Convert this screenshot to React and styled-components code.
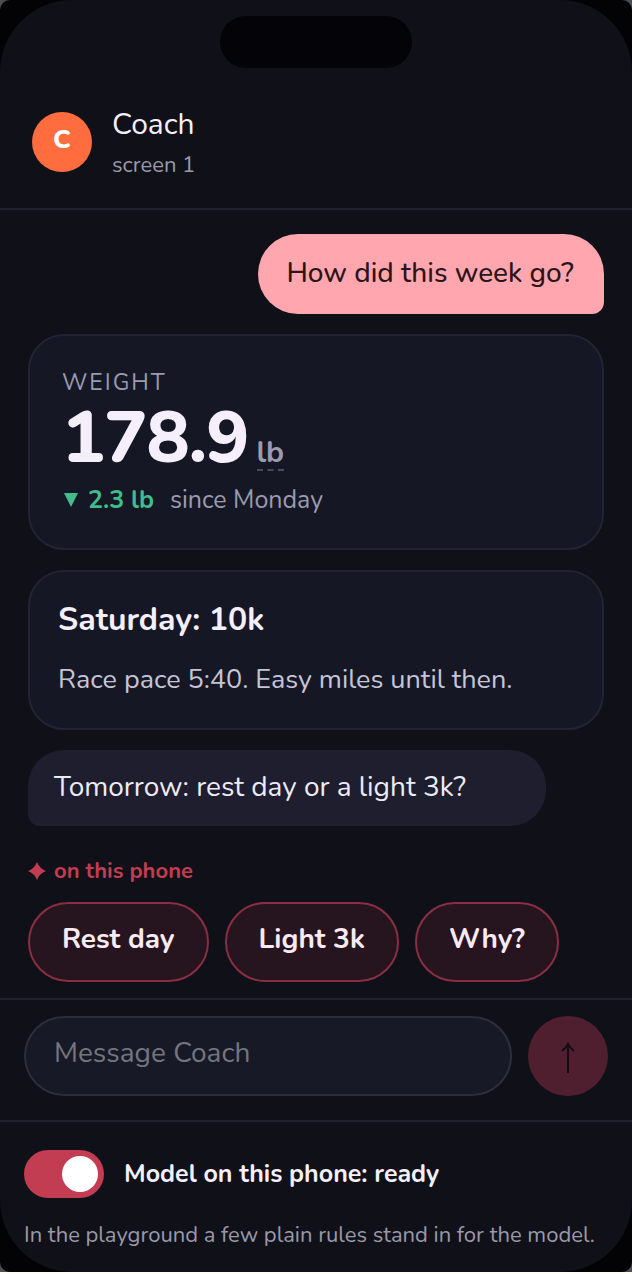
import React, { useState } from "react";
import styled, { createGlobalStyle } from "styled-components";

const GlobalStyle = createGlobalStyle`
  * { box-sizing: border-box; }
  body {
    margin: 0;
    background: #fffdf5;
    font-family: Nunito, Lato, "Liberation Sans", sans-serif;
    color: #f5effc;
  }
  button, input { font: inherit; color: inherit; }
  h1, h2, p { margin: 0; font-weight: 400; }
`;

const Frame = styled.div`
  background: #4c4d52;
`;

const Bezel = styled.div`
  border-radius: 10px;
  background: #030306;
`;

const Screen = styled.main`
  display: flex;
  flex-direction: column;
  border-radius: 72px;
  overflow: hidden;
  background: #101118;
`;

const StatusArea = styled.div`
  display: flex;
  justify-content: center;
  padding: 16px;
`;

const Island = styled.div`
  width: 192px;
  height: 52px;
  border-radius: 26px;
  background: #030308;
`;

const Header = styled.header`
  display: flex;
  align-items: center;
  gap: 20px;
  padding: 20px 32px 24px;
  border-bottom: 2px solid #20212c;
`;

const Avatar = styled.span`
  display: grid;
  place-items: center;
  width: 60px;
  height: 60px;
  margin-bottom: 4px;
  border-radius: 50%;
  background: #ff6d3f;
  color: #fff;
  font-size: 26px;
  font-weight: 800;
  line-height: 36px;
  padding-bottom: 4px;
`;

const Name = styled.h1`
  font-size: 30px;
  line-height: 42px;
`;

const Subtitle = styled.p`
  font-size: 22px;
  line-height: 38px;
  color: #9a99aa;
`;

const Chat = styled.section`
  display: flex;
  flex-direction: column;
  gap: 20px;
  padding: 24px 28px 16px;
`;

const Bubble = styled.p`
  align-self: ${(p) => (p.$mine ? "flex-end" : "flex-start")};
  min-width: ${(p) => (p.$mine ? "60%" : "90%")};
  padding: ${(p) => (p.$mine ? "19px 28px 21px" : "17px 26px 19px")};
  border-radius: ${(p) => (p.$mine ? "40px 40px 12px 40px" : "36px 36px 36px 12px")};
  background: ${(p) => (p.$mine ? "#ffa6af" : "#1e1e2e")};
  color: ${(p) => (p.$mine ? "#2c1519" : "#ecebf8")};
  font-size: 28px;
  font-weight: ${(p) => (p.$mine ? 500 : 400)};
  line-height: 40px;
`;

const Card = styled.article`
  padding: ${(p) => (p.$roomy ? "28px 32px" : "25px 28px")};
  border: 2px solid #222334;
  border-radius: 36px;
  background: #161724;
`;

const MetricLabel = styled.h2`
  font-size: 23px;
  line-height: 38px;
  letter-spacing: 2px;
  text-transform: uppercase;
  color: #9a9bb0;
`;

const MetricValue = styled.p`
  display: flex;
  align-items: baseline;
  gap: 8px;
  font-size: 72px;
  font-weight: 800;
  line-height: 72px;
`;

const Figure = styled.span`
  letter-spacing: -1px;
`;

const Unit = styled.abbr`
  border-bottom: 2px dashed #484a60;
  color: #9a9bb0;
  font-size: 30px;
  font-weight: 700;
  line-height: 32px;
  text-decoration: none;
`;

const Trend = styled.p`
  display: flex;
  align-items: center;
  gap: 10px;
  padding: 6px 0 0 2px;
  font-size: 25px;
  line-height: 40px;
  color: #9a9bb0;
`;

const Delta = styled.strong`
  margin-right: 6px;
  color: #3fbd8b;
  font-weight: 700;
`;

const CardTitle = styled.h2`
  font-size: 32px;
  font-weight: 700;
  line-height: 46px;
`;

const CardText = styled.p`
  margin-top: 16px;
  padding-bottom: 2px;
  font-size: 27px;
  line-height: 42px;
  color: #c5c5d8;
`;

const Origin = styled.p`
  display: flex;
  align-items: center;
  gap: 8px;
  padding: 7px 0 5px;
  color: #c23c52;
  font-size: 22px;
  font-weight: 700;
  line-height: 36px;
`;

const Suggestions = styled.div`
  display: flex;
  flex-direction: column;
  gap: 8px;
`;

const Chips = styled.div`
  display: flex;
  flex-wrap: wrap;
  gap: 16px;
`;

const Chip = styled.button`
  padding: 15px 32px 21px;
  border: 2px solid #8b2e44;
  border-radius: 40px;
  background: #26151e;
  color: #fbeaf5;
  font-size: 28px;
  font-weight: 700;
  line-height: 40px;
`;

const Composer = styled.form`
  display: flex;
  gap: 16px;
  padding: 16px 24px 24px;
  border-top: 2px solid #20212c;
`;

const MessageInput = styled.input`
  flex: 1;
  min-width: 0;
  height: 80px;
  padding: 0 28px 6px;
  border: 2px solid #2c2e3c;
  border-radius: 40px;
  background: #171a26;
  font-size: 28px;
  &::placeholder { color: #74757e; opacity: 1; }
`;

const Send = styled.button`
  display: grid;
  place-items: center;
  width: 80px;
  height: 80px;
  padding: 4px 0 0;
  border: 0;
  border-radius: 50%;
  background: #501f2f;
  color: #160b12;
`;

const Footer = styled.footer`
  padding: 28px 24px 19px;
  border-top: 2px solid #20212c;
`;

const SwitchRow = styled.label`
  display: flex;
  align-items: center;
  gap: 20px;
  font-size: 25px;
  font-weight: 700;
  line-height: 48px;
`;

const Switch = styled.input`
  appearance: none;
  display: flex;
  align-items: center;
  justify-content: ${(p) => (p.checked ? "flex-end" : "flex-start")};
  width: 80px;
  height: 48px;
  margin: 0;
  padding: 6px;
  border-radius: 24px;
  background: ${(p) => (p.checked ? "#c23c52" : "#2c2e3c")};
  &::before {
    content: "";
    width: 36px;
    height: 36px;
    border-radius: 50%;
    background: #fff;
  }
`;

const Note = styled.p`
  margin-top: 19px;
  font-size: 22px;
  line-height: 36px;
  color: #9a99aa;
`;

const replies = ["Rest day", "Light 3k", "Why?"];

export default function App() {
  const [ready, setReady] = useState(true);
  const [message, setMessage] = useState("");
  return (
    <Frame>
      <GlobalStyle />
      <Bezel>
        <Screen>
          <StatusArea><Island /></StatusArea>
          <Header>
            <Avatar>C</Avatar>
            <div>
              <Name>Coach</Name>
              <Subtitle>screen 1</Subtitle>
            </div>
          </Header>
          <Chat>
            <Bubble $mine>How did this week go?</Bubble>
            <Card $roomy>
              <MetricLabel>Weight</MetricLabel>
              <MetricValue><Figure>178.9</Figure> <Unit>lb</Unit></MetricValue>
              <Trend>
                <svg width="14" height="14" viewBox="0 0 14 14" aria-hidden="true"><path d="M0 0h14L7 14z" fill="#3fbd8b" /></svg>
                <Delta>2.3 lb</Delta>
                <span>since Monday</span>
              </Trend>
            </Card>
            <Card>
              <CardTitle>Saturday: 10k</CardTitle>
              <CardText>Race pace 5:40. Easy miles until then.</CardText>
            </Card>
            <Bubble>Tomorrow: rest day or a light 3k?</Bubble>
            <Suggestions>
              <Origin>
                <svg width="18" height="18" viewBox="0 0 18 18" aria-hidden="true"><path d="M9 0Q11.5 6.500 18 9Q11.5 11.500 9 18Q6.500 11.500 0 9Q6.500 6.500 9 0z" fill="currentColor" /></svg>
                on this phone
              </Origin>
              <Chips>
                {replies.map((reply) => <Chip type="button" key={reply}>{reply}</Chip>)}
              </Chips>
            </Suggestions>
          </Chat>
          <Composer onSubmit={(e) => e.preventDefault()}>
            <MessageInput
              aria-label="Message Coach"
              placeholder="Message Coach"
              value={message}
              onChange={(e) => setMessage(e.target.value)}
            />
            <Send aria-label="Send">
              <svg width="14" height="32" viewBox="0 0 14 32" fill="none" stroke="currentColor" strokeWidth="2" aria-hidden="true">
                <path d="M7 31V2M1 9Q5 6 7 2Q9 6 13 9" />
              </svg>
            </Send>
          </Composer>
          <Footer>
            <SwitchRow>
              <Switch type="checkbox" role="switch" checked={ready} onChange={(e) => setReady(e.target.checked)} />
              Model on this phone: ready
            </SwitchRow>
            <Note>In the playground a few plain rules stand in for the model.</Note>
          </Footer>
        </Screen>
      </Bezel>
    </Frame>
  );
}
